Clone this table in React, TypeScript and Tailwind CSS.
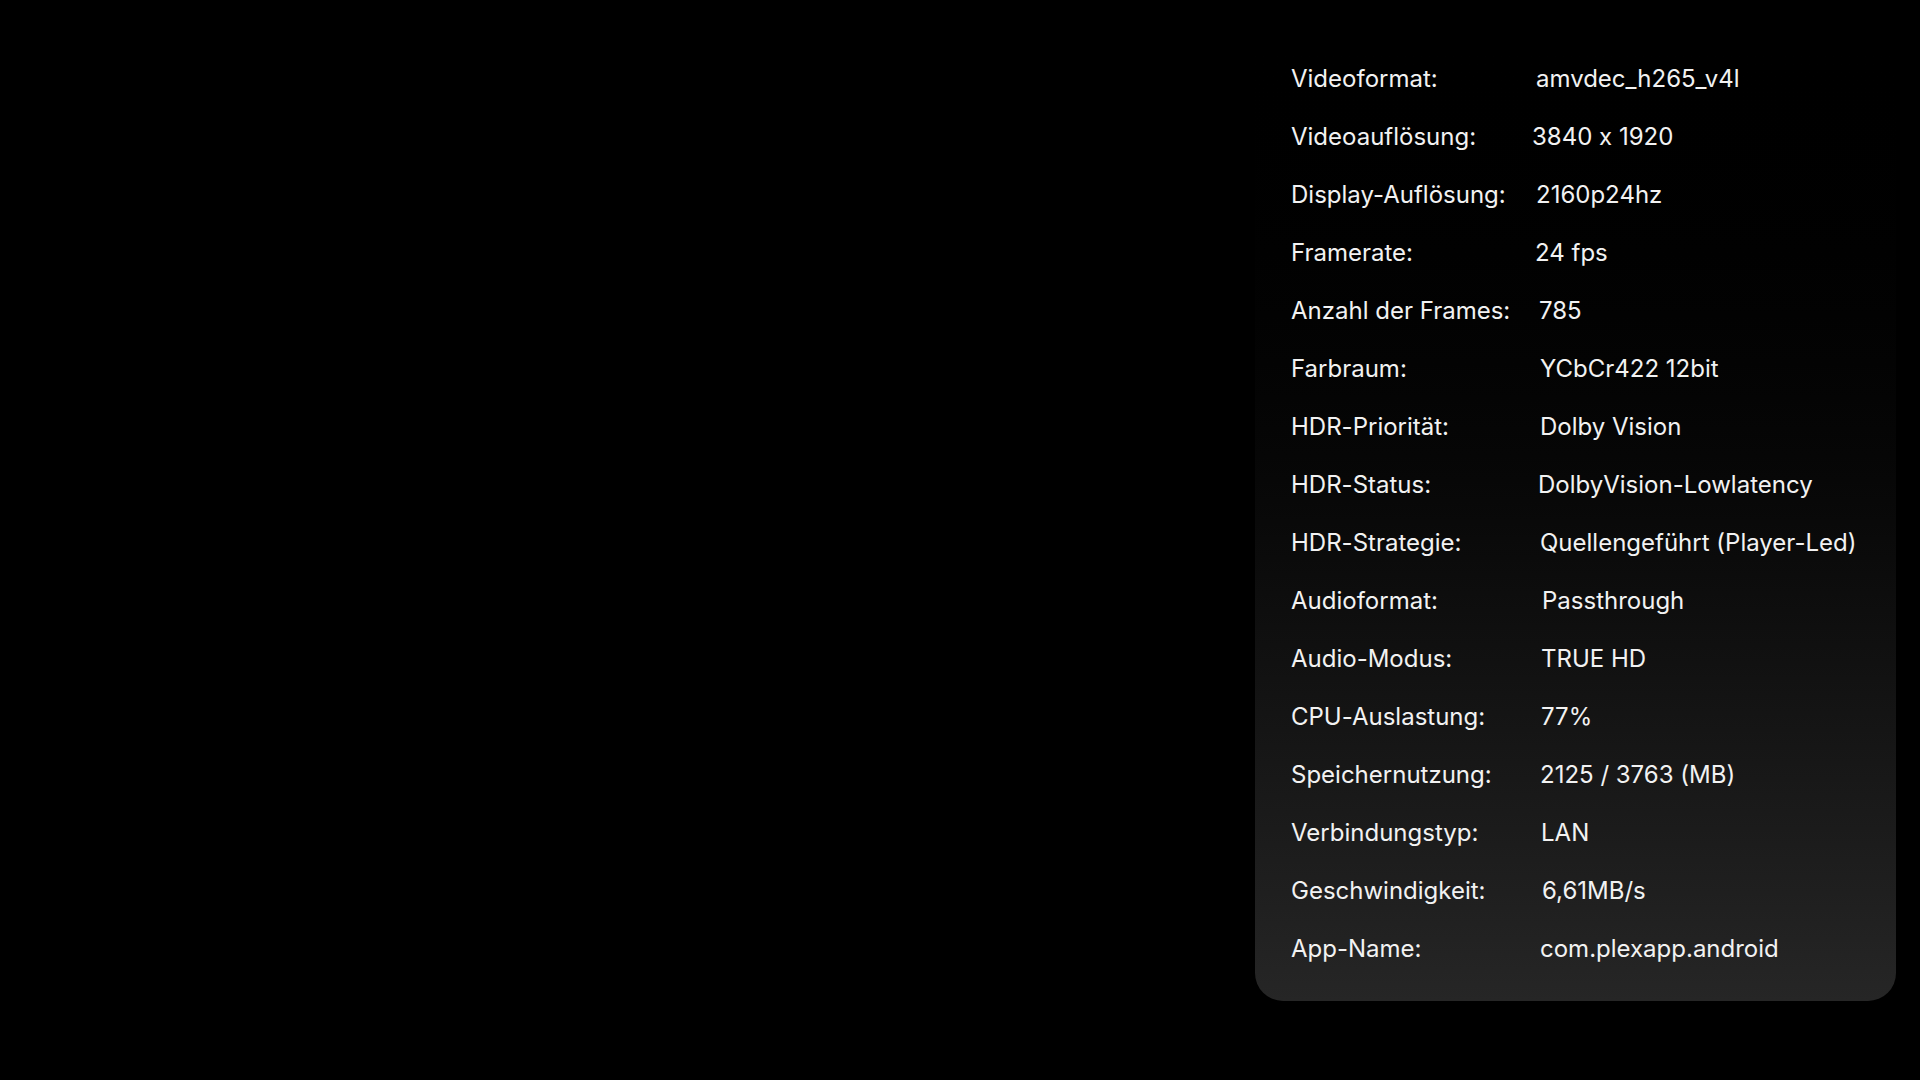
const rows = [
  { label: "Videoformat:", value: "amvdec_h265_v4l", shift: "ml-[0px]" },
  { label: "Videoauflösung:", value: "3840 x 1920", shift: "-ml-[4px]" },
  { label: "Display-Auflösung:", value: "2160p24hz", shift: "ml-[0px]" },
  { label: "Framerate:", value: "24 fps", shift: "-ml-[1px]" },
  { label: "Anzahl der Frames:", value: "785", shift: "ml-[3px]" },
  { label: "Farbraum:", value: "YCbCr422 12bit", shift: "ml-[4px]" },
  { label: "HDR-Priorität:", value: "Dolby Vision", shift: "ml-[4px]" },
  { label: "HDR-Status:", value: "DolbyVision-Lowlatency", shift: "ml-[2px]" },
  { label: "HDR-Strategie:", value: "Quellengeführt (Player-Led)", shift: "ml-[4px]" },
  { label: "Audioformat:", value: "Passthrough", shift: "ml-[6px]" },
  { label: "Audio-Modus:", value: "TRUE HD", shift: "ml-[5px]" },
  { label: "CPU-Auslastung:", value: "77%", shift: "ml-[5px]" },
  { label: "Speichernutzung:", value: "2125 / 3763 (MB)", shift: "ml-[4px]" },
  { label: "Verbindungstyp:", value: "LAN", shift: "ml-[5px]" },
  { label: "Geschwindigkeit:", value: "6,61MB/s", shift: "ml-[6px]" },
  { label: "App-Name:", value: "com.plexapp.android", shift: "ml-[4px]" },
];

export default function App() {
  return (
    <div className="flex h-[1080px] w-[1920px] justify-end overflow-hidden bg-black pr-[24px] font-['Inter',sans-serif] text-[#f2f2f2] [font-feature-settings:'calt'_0]">
      <div className="flex h-[1001px] w-[641px] flex-col rounded-b-[28px] bg-gradient-to-b from-[#000000] to-[#262626] pl-[36px] pt-[50px]">
        {rows.map((row) => (
          <div key={row.label} className="flex h-[58px] items-center text-[24px] leading-none">
            <span className="w-[245px] shrink-0">{row.label}</span>
            <span className={row.shift}>{row.value}</span>
          </div>
        ))}
      </div>
    </div>
  );
}
